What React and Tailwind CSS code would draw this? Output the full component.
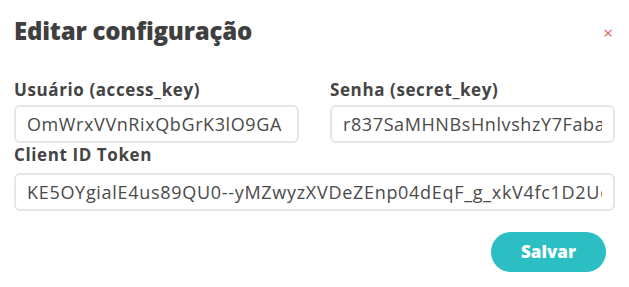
export default function App() {
    const font = { fontFamily: '"Open Sans", sans-serif' }
    return (
        <div className="w-[629px] h-[287px] bg-white text-[#444444] px-[14px] pt-[14px]" style={font}>
            <div className="flex items-center justify-between h-[34px]">
                <h1 className="text-[24px] font-extrabold text-[#3f3f3f] tracking-[-0.2px]">Editar configuração</h1>
                <button className="text-[#e35a5a] text-[17px] leading-none mr-[2px] mt-[2px]">×</button>
            </div>

            <div className="grid grid-cols-2 gap-x-[31px] mt-[32px]">
                <div className="flex flex-col">
                    <label className="text-[17px] font-bold leading-[20px] tracking-[0.6px]">Usuário (access_key)</label>
                    <input
                        readOnly
                        value="OmWrxVVnRixQbGrK3lO9GA"
                        className="mt-[5px] h-[38px] border-2 border-[#e6e6e6] rounded-[6px] px-[11px] text-[18px] tracking-[0.6px] text-[#4a4a4a] outline-none"
                    />
                </div>
                <div className="flex flex-col">
                    <label className="text-[17px] font-bold leading-[20px] tracking-[0.6px]">Senha (secret_key)</label>
                    <input
                        readOnly
                        value="r837SaMHNBsHnlvshzY7FabahKW2"
                        className="mt-[5px] h-[38px] border-2 border-[#e6e6e6] rounded-[6px] px-[11px] text-[18px] tracking-[0.6px] text-[#4a4a4a] outline-none"
                    />
                </div>
            </div>

            <div className="flex flex-col mt-[2px]">
                <label className="text-[17px] font-bold leading-[20px] tracking-[0.6px]">Client ID Token</label>
                <input
                    readOnly
                    value="KE5OYgialE4us89QU0--yMZwyzXVDeZEnp04dEqF_g_xkV4fc1D2Uq8"
                    className="mt-[8px] h-[38px] border-2 border-[#e6e6e6] rounded-[6px] px-[11px] text-[18px] tracking-[0.7px] text-[#4a4a4a] outline-none"
                />
            </div>

            <div className="flex justify-end mt-[21px] pr-[9px]">
                <button className="w-[115px] h-[40px] rounded-full bg-[#2bbfc4] text-white text-[17px] font-extrabold">
                    Salvar
                </button>
            </div>
        </div>
    )
}
